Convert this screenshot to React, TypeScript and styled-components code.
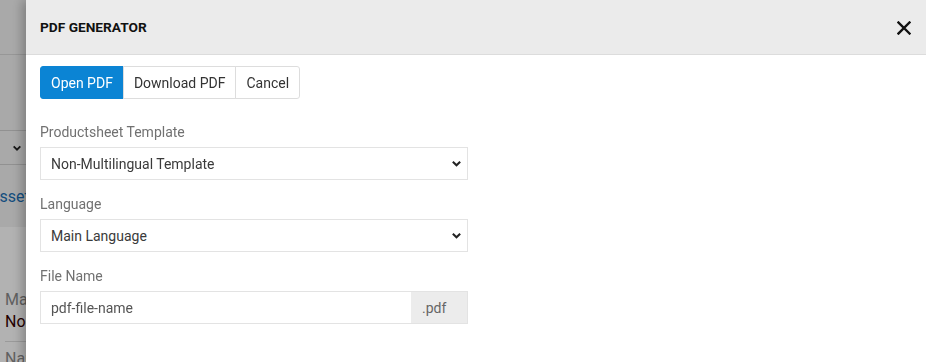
import React, { useState } from 'react';
import styled, { createGlobalStyle } from 'styled-components';

const GlobalStyle = createGlobalStyle`
  html, body {
    margin: 0;
    padding: 0;
    width: 926px;
    height: 362px;
    overflow: hidden;
    font-family: Roboto, "Liberation Sans", Arial, sans-serif;
  }
`;

const templates = ['Non-Multilingual Template', 'Multilingual Template'];
const languages = ['Main Language', 'English', 'German'];

const App: React.FC = () => {
  const [template, setTemplate] = useState(templates[0]);
  const [language, setLanguage] = useState(languages[0]);
  const [fileName, setFileName] = useState('pdf-file-name');

  return (
    <>
      <GlobalStyle />
      {/* page behind the modal */}
      <Page>
        <PageTop>
          <PageHeader />
          <PageSpacer />
          <PageSelect>
            <Chevron size={10} />
          </PageSelect>
          <PageLink>Asset</PageLink>
        </PageTop>
        <PageBottom>
          <PageLabel>Main</PageLabel>
          <PageValue>Non</PageValue>
          <PageLabel $ruled>Name</PageLabel>
        </PageBottom>
      </Page>
      <Backdrop />

      <Modal>
        <Header>
          <Title>PDF GENERATOR</Title>
          <CloseButton aria-label="close">
            <svg width="14" height="14" viewBox="0 0 14 14">
              <path d="M1.5 1.5 L12.5 12.5 M12.5 1.5 L1.5 12.5" stroke="#111" strokeWidth="2.4" strokeLinecap="square" />
            </svg>
          </CloseButton>
        </Header>

        <Body>
          <ButtonGroup>
            <GroupButton $primary>Open PDF</GroupButton>
            <GroupButton>Download PDF</GroupButton>
            <GroupButton>Cancel</GroupButton>
          </ButtonGroup>

          <Field>
            <Label>Productsheet Template</Label>
            <SelectWrap>
              <Select value={template} onChange={(e) => setTemplate(e.target.value)}>
                {templates.map((t) => (
                  <option key={t}>{t}</option>
                ))}
              </Select>
              <SelectArrow>
                <Chevron size={11} />
              </SelectArrow>
            </SelectWrap>
          </Field>

          <Field>
            <Label>Language</Label>
            <SelectWrap>
              <Select value={language} onChange={(e) => setLanguage(e.target.value)}>
                {languages.map((l) => (
                  <option key={l}>{l}</option>
                ))}
              </Select>
              <SelectArrow>
                <Chevron size={11} />
              </SelectArrow>
            </SelectWrap>
          </Field>

          <Field>
            <Label>File Name</Label>
            <InputGroup>
              <Input value={fileName} onChange={(e) => setFileName(e.target.value)} />
              <Addon>.pdf</Addon>
            </InputGroup>
          </Field>
        </Body>
      </Modal>
    </>
  );
};

export default App;

const Chevron: React.FC<{ size: number }> = ({ size }) => (
  <svg width={size} height={size} viewBox="0 0 12 12">
    <path d="M2 4 L6 8 L10 4" fill="none" stroke="#222" strokeWidth="2.2" />
  </svg>
);

const Page = styled.div`
  height: 362px;
  overflow: hidden;
  display: flex;
  flex-direction: column;
  background: #fff;
`;

const PageTop = styled.div`
  background: #f2f2f2;
  height: 227px;
  flex-shrink: 0;
  display: flex;
  flex-direction: column;
`;

const PageHeader = styled.div`
  height: 54px;
  border-bottom: 1px solid #d8d8d8;
`;

const PageSpacer = styled.div`
  height: 75px;
`;

const PageSelect = styled.div`
  height: 33px;
  border-top: 1px solid #d0d0d0;
  border-bottom: 1px solid #d0d0d0;
  display: flex;
  align-items: center;
  padding-left: 12px;
  width: 40px;
`;

const PageLink = styled.div`
  margin-top: 22px;
  margin-left: -11px;
  font-size: 16px;
  color: #1a6fb5;
`;

const PageBottom = styled.div`
  flex-shrink: 0;
  padding: 62px 0 0 5px;
  display: flex;
  flex-direction: column;
`;

const PageLabel = styled.div<{ $ruled?: boolean }>`
  font-size: 16px;
  color: #8a8a8a;
  line-height: 22px;
  ${(p) => (p.$ruled ? 'border-top: 1px solid #ddd; margin-top: 8px; padding-top: 6px;' : '')}
`;

const PageValue = styled.div`
  font-size: 16px;
  color: #300;
  line-height: 22px;
`;

const Backdrop = styled.div`
  position: fixed;
  inset: 0;
  background: rgba(0, 0, 0, 0.3);
`;

const Modal = styled.div`
  position: fixed;
  top: 0;
  bottom: 0;
  left: 26px;
  right: 0;
  background: #fff;
  box-shadow: -4px 0 10px rgba(0, 0, 0, 0.25);
  display: flex;
  flex-direction: column;
`;

const Header = styled.div`
  height: 54px;
  flex-shrink: 0;
  background: #ebebeb;
  border-bottom: 1px solid #dcdcdc;
  display: flex;
  align-items: center;
  justify-content: space-between;
  padding: 0 15px 0 14px;
`;

const Title = styled.h4`
  margin: 0 0 1px;
  font-size: 13.7px;
  font-weight: 700;
  color: #111;
`;

const CloseButton = styled.button`
  border: none;
  background: none;
  padding: 0;
  display: flex;
  cursor: pointer;
  margin-top: 1px;
`;

const Body = styled.div`
  padding: 11px 14px;
  display: flex;
  flex-direction: column;
  align-items: flex-start;
`;

const ButtonGroup = styled.div`
  display: flex;
  margin-bottom: 23px;
`;

const GroupButton = styled.button<{ $primary?: boolean }>`
  height: 33px;
  padding: 0 10px;
  font-family: Roboto, "Liberation Sans", Arial, sans-serif;
  font-size: 14px;
  border: 1px solid ${(p) => (p.$primary ? '#0b84d4' : '#dddddd')};
  background: ${(p) => (p.$primary ? '#0b84d4' : '#fff')};
  color: ${(p) => (p.$primary ? '#fff' : '#333')};
  margin-left: -1px;
  border-radius: 0;
  cursor: pointer;

  &:first-child {
    margin-left: 0;
    border-radius: 3px 0 0 3px;
  }
  &:last-child {
    border-radius: 0 3px 3px 0;
  }
`;

const Field = styled.div`
  display: flex;
  flex-direction: column;
  width: 428px;
  margin-bottom: 14px;
`;

const Label = styled.label`
  font-size: 14px;
  line-height: 20px;
  color: #717171;
  margin-bottom: 5px;
`;

const SelectWrap = styled.div`
  position: relative;
  display: flex;
`;

const Select = styled.select`
  appearance: none;
  width: 100%;
  height: 33px;
  border: 1px solid #e3e3e3;
  border-radius: 0;
  background: #fff;
  padding: 0 10px;
  font-family: Roboto, "Liberation Sans", Arial, sans-serif;
  font-size: 14px;
  color: #3a3a3a;
  outline: none;
`;

const SelectArrow = styled.span`
  position: absolute;
  right: 6px;
  top: 11px;
  display: flex;
  pointer-events: none;
`;

const InputGroup = styled.div`
  display: flex;
  height: 33px;
`;

const Input = styled.input`
  flex: 1;
  min-width: 0;
  border: 1px solid #e3e3e3;
  border-right: none;
  padding: 0 10px;
  font-family: Roboto, "Liberation Sans", Arial, sans-serif;
  font-size: 14px;
  color: #555;
  outline: none;
`;

const Addon = styled.span`
  width: 57px;
  box-sizing: border-box;
  background: #ececec;
  border: 1px solid #e3e3e3;
  border-left: none;
  display: flex;
  align-items: center;
  padding-left: 11px;
  font-size: 14px;
  color: #666;
`;
